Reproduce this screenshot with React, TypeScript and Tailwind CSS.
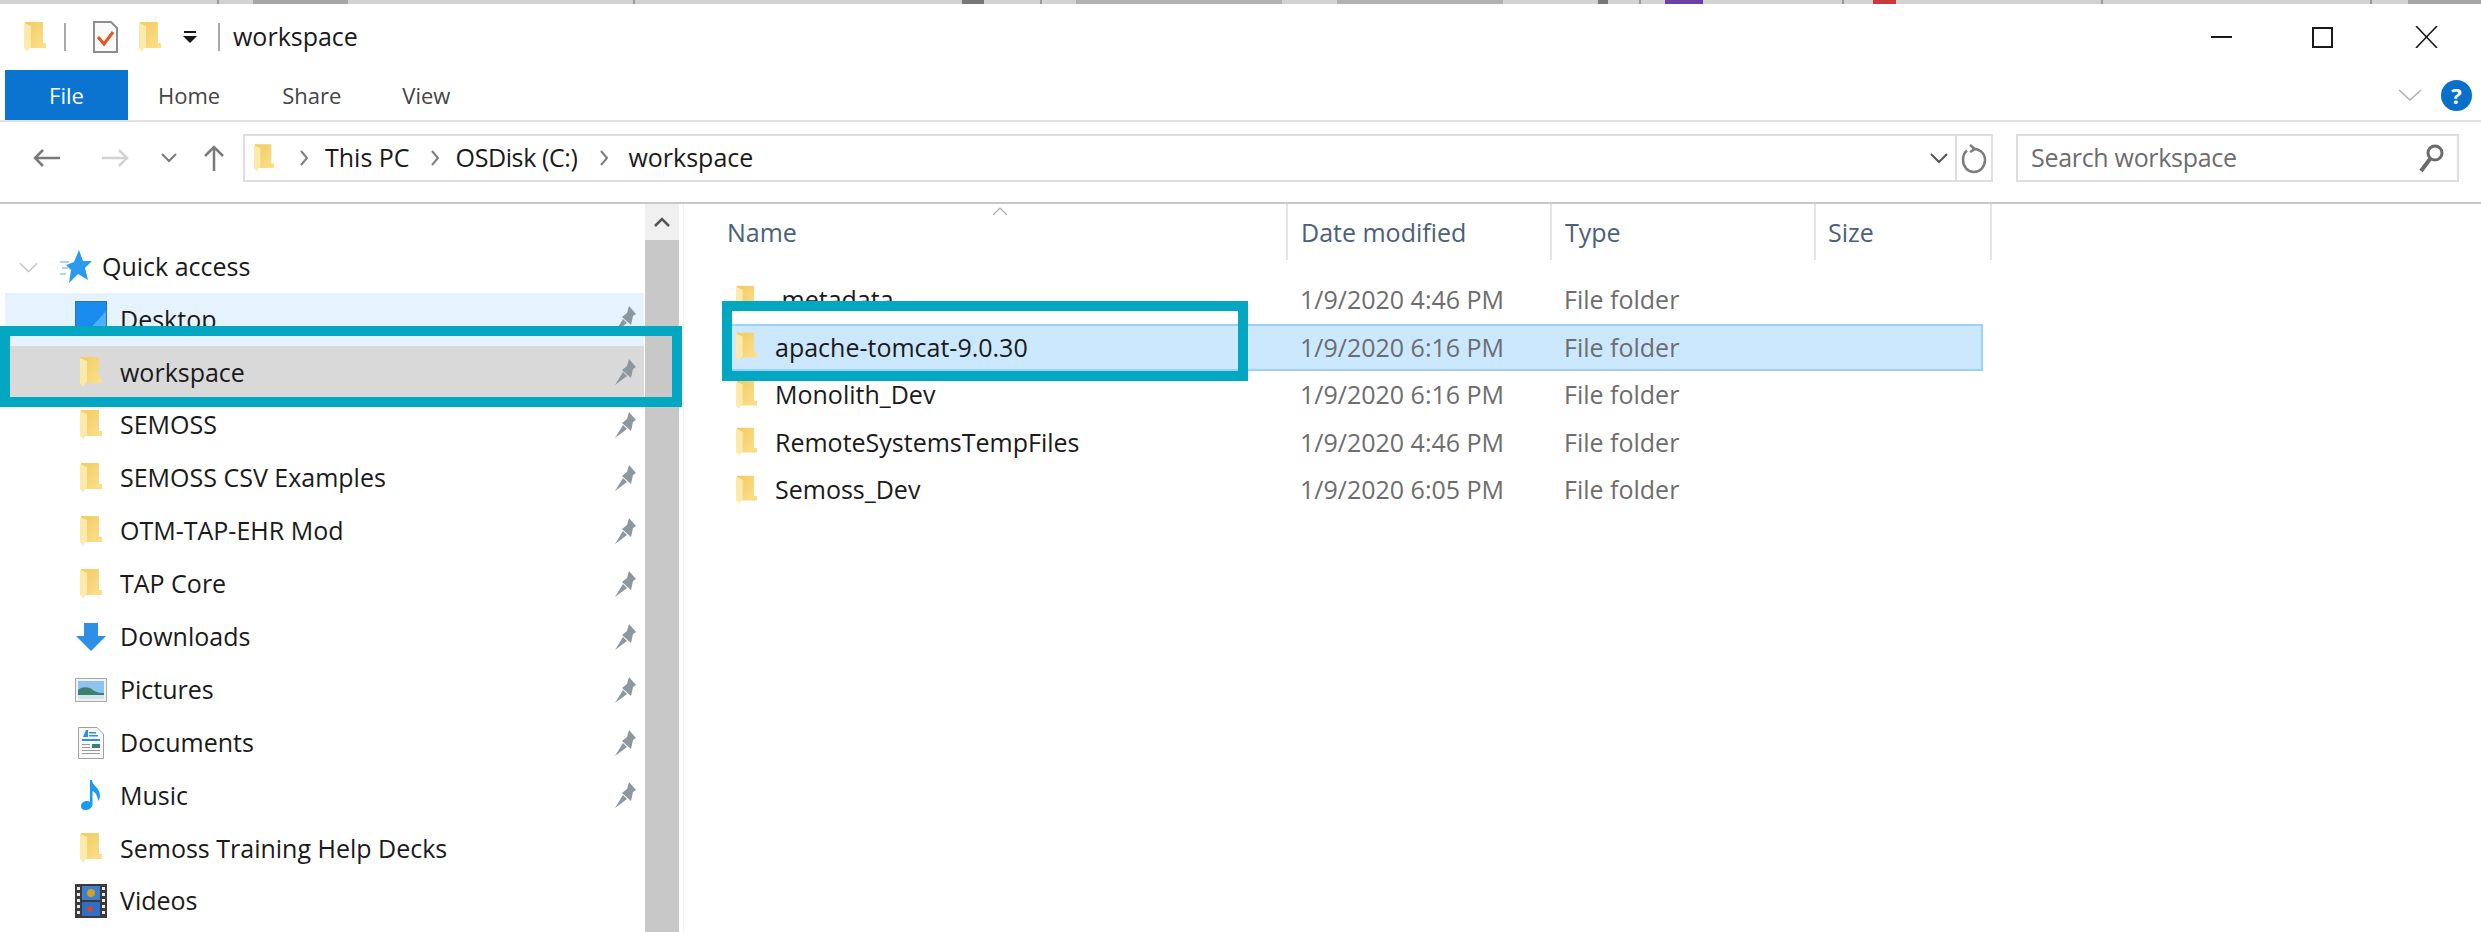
const segments = [
  "w-[217px]", "w-[2px] bg-[#999]", "w-[34px]", "w-[95px] bg-[#a6a6a4]", "w-[285px]", "w-[2px] bg-[#999]", "w-[327px]",
  "w-[22px] bg-[#777]", "w-[56px]", "w-[2px] bg-[#999]", "w-[34px]", "w-[206px] bg-[#b0b0ae]", "w-[55px]", "w-[166px] bg-[#b0b0ae]",
  "w-[95px]", "w-[10px] bg-[#777]", "w-[31px]", "w-[2px] bg-[#999]", "w-[24px]", "w-[38px] bg-[#6b3fa5]", "w-[139px]", "w-[2px] bg-[#999]",
  "w-[29px]", "w-[23px] bg-[#c8383c]", "w-[205px]", "w-[2px] bg-[#999]", "w-[267px]", "w-[2px] bg-[#999]", "w-[36px]", "w-[73px] bg-[#a6a6a4]",
];

const pinned = ["Desktop", "workspace", "SEMOSS", "SEMOSS CSV Examples", "OTM-TAP-EHR Mod", "TAP Core", "Downloads", "Pictures", "Documents", "Music"];

const files = [
  { name: ".metadata", date: "1/9/2020 4:46 PM" },
  { name: "apache-tomcat-9.0.30", date: "1/9/2020 6:16 PM", selected: true },
  { name: "Monolith_Dev", date: "1/9/2020 6:16 PM" },
  { name: "RemoteSystemsTempFiles", date: "1/9/2020 4:46 PM" },
  { name: "Semoss_Dev", date: "1/9/2020 6:05 PM" },
];

function Folder({ className = "w-[22px] h-[30px]" }: { className?: string }) {
  return (
    <svg viewBox="0 0 22 30" className={className}>
      <defs>
        <linearGradient id="folderBody" x1="0" y1="0" x2="1" y2="1">
          <stop offset="0" stopColor="#f2cb62" />
          <stop offset="1" stopColor="#fbe08c" />
        </linearGradient>
      </defs>
      <path d="M1 0H19V21H22V26H4L1 22Z" fill="url(#folderBody)" />
      <path d="M0 1L7 4V25L4 27.500V30L0 26Z" fill="#fce9ac" />
    </svg>
  );
}

function Pin() {
  return (
    <svg viewBox="0 0 22 30" className="w-[22px] h-[30px]">
      <path d="M15 2L22 10L19 12L17 21L8 13L13 9Z" fill="#8c979e" />
      <path d="M9 15L1 28L13 19Z" fill="#8c979e" />
    </svg>
  );
}

function RowIcon({ name }: { name: string }) {
  if (name === "Desktop") {
    return (
      <svg viewBox="0 0 32 32" className="w-[32px] h-[32px] mt-[-4px]">
        <rect x="0.5" y="0.5" width="31" height="31" fill="#1a8cf0" stroke="#3b6ea5" />
        <path d="M12 31L31 10V31Z" fill="#4db1fa" />
      </svg>
    );
  }
  if (name === "Downloads") {
    return (
      <svg viewBox="0 0 30 28" className="w-[30px] h-[28px]">
        <path d="M8 0H22V13H30L15 28L0 13H8Z" fill="#2f8fe6" />
      </svg>
    );
  }
  if (name === "Pictures") {
    return (
      <svg viewBox="0 0 32 24" className="w-[32px] h-[24px]">
        <rect x="0.5" y="0.5" width="31" height="23" fill="#f2f2f2" stroke="#a8a8a8" />
        <rect x="3" y="3" width="26" height="18" fill="#8cc4ee" />
        <path d="M3 12C8 8 14 9 18 12C22 15 26 15 29 15V21H3Z" fill="#3f7f70" />
        <path d="M3 17H29V21H3Z" fill="#cfe6ee" />
      </svg>
    );
  }
  if (name === "Documents") {
    return (
      <svg viewBox="0 0 26 32" className="w-[26px] h-[32px]">
        <path d="M0.5 0.5H19L25.5 7V31.5H0.5Z" fill="#fafafa" stroke="#a0a0a0" />
        <path d="M5 10L8 3H10V10ZM11 5H18V6.500H11ZM11 8H20V9.500H11Z" fill="#2f8fe6" />
        <path d="M4 12H22V14H4Z" fill="#2f8fe6" />
        <path d="M4 17H12V18H4ZM4 20H12V21H4ZM4 23H22V24H4ZM4 26H22V27H4Z" fill="#999" />
        <rect x="14" y="17" width="8" height="4" fill="#3b7f70" />
      </svg>
    );
  }
  if (name === "Music") {
    return (
      <svg viewBox="0 0 20 30" className="w-[20px] h-[30px]">
        <path d="M9 0H11C11 6 19 7 19 16C19 18 18 20 17 21C17 16 14 12 11.500 11V24C11.500 28 8 30 4 30C1 30 0 28 0 26C0 23 3 21 6 21C7.500 21 8.500 21.500 9 22Z" fill="#1a9bf0" />
      </svg>
    );
  }
  return <Folder />;
}

function NavChevron() {
  return (
    <svg viewBox="0 0 10 16" className="w-[10px] h-[16px]">
      <path d="M2 1L8 8L2 15" fill="none" stroke="#7d7d7d" strokeWidth="2" />
    </svg>
  );
}

export default function App() {
  return (
    <div className="relative w-full h-[932px] overflow-hidden bg-white text-[25px] text-[#1a1a1a]" style={{ fontFamily: '"Open Sans", sans-serif' }}>
      {/* sliver of the window behind */}
      <div className="flex h-[4px] bg-[#d3d3d1]">
        {segments.map((s, i) => (
          <div key={i} className={s} />
        ))}
      </div>

      {/* title bar */}
      <div className="flex items-center h-[66px] pl-[24px]">
        <Folder />
        <div className="w-[2px] h-[28px] bg-[#a8a8a8] ml-[18px]" />
        <svg viewBox="0 0 25 32" className="w-[25px] h-[32px] ml-[27px]">
          <path d="M1 1H18L24 7V31H1Z" fill="#fafafa" stroke="#8d8d8d" strokeWidth="2" />
          <path d="M5 16L11 23L20 11" fill="none" stroke="#e8541e" strokeWidth="3" />
        </svg>
        <Folder className="w-[22px] h-[30px] ml-[21px]" />
        <svg viewBox="0 0 14 12" className="w-[14px] h-[12px] ml-[22px]">
          <path d="M1 0H13V2H1ZM0 5H14L7 12Z" fill="#1a1a1a" />
        </svg>
        <div className="w-[2px] h-[28px] bg-[#a8a8a8] ml-[21px]" />
        <span className="ml-[13px]">workspace</span>
        <div className="ml-auto flex items-center">
          <div className="w-[21px] h-[2px] bg-[#1a1a1a]" />
          <div className="w-[21px] h-[21px] border-2 border-[#1a1a1a] ml-[80px]" />
          <svg viewBox="0 0 23 22" className="w-[23px] h-[22px] ml-[82px] mr-[43px]">
            <path d="M1 0L22 22M22 0L1 22" stroke="#1a1a1a" strokeWidth="1.600" />
          </svg>
        </div>
      </div>

      {/* ribbon tabs */}
      <div className="flex items-center h-[52px] pl-[5px] border-b-2 border-[#e1e1e1] text-[22px] text-[#444]">
        <div className="flex items-center justify-center w-[123px] h-[50px] bg-[#0a74d0] text-white">File</div>
        <span className="ml-[30px]">Home</span>
        <span className="ml-[62px]">Share</span>
        <span className="ml-[61px]">View</span>
        <svg viewBox="0 0 24 12" className="w-[24px] h-[12px] ml-auto">
          <path d="M1 1L12 11L23 1" fill="none" stroke="#b0b0b0" strokeWidth="1.500" />
        </svg>
        <div className="flex items-center justify-center w-[31px] h-[31px] rounded-full bg-[#0a6fc8] text-white font-bold ml-[19px] mr-[9px]">?</div>
      </div>

      {/* address row */}
      <div className="flex items-center h-[82px] pl-[33px] pb-[8px] border-b-2 border-[#c8c8c8]">
        <svg viewBox="0 0 28 20" className="w-[28px] h-[20px]">
          <path d="M27 10H2M10 2L2 10L10 18" fill="none" stroke="#7a7a7a" strokeWidth="2.500" />
        </svg>
        <svg viewBox="0 0 28 20" className="w-[28px] h-[20px] ml-[40px]">
          <path d="M1 10H26M18 2L26 10L18 18" fill="none" stroke="#d2d2d2" strokeWidth="2.500" />
        </svg>
        <svg viewBox="0 0 16 10" className="w-[16px] h-[10px] ml-[32px]">
          <path d="M1 1L8 8L15 1" fill="none" stroke="#7a7a7a" strokeWidth="2" />
        </svg>
        <svg viewBox="0 0 20 26" className="w-[20px] h-[26px] ml-[27px]">
          <path d="M10 26V2M1 11L10 2L19 11" fill="none" stroke="#7a7a7a" strokeWidth="2.500" />
        </svg>
        <div className="flex items-center w-[1750px] h-[48px] ml-[19px] border-2 border-[#dedede]">
          <Folder className="w-[20px] h-[30px] ml-[9px]" />
          <div className="ml-[25px]"><NavChevron /></div>
          <span className="ml-[16px]">This PC</span>
          <div className="ml-[20px]"><NavChevron /></div>
          <span className="ml-[16px] tracking-[-0.4px]">OSDisk (C:)</span>
          <div className="ml-[22px]"><NavChevron /></div>
          <span className="ml-[19px]">workspace</span>
          <svg viewBox="0 0 18 11" className="w-[18px] h-[11px] ml-auto mr-[7px]">
            <path d="M1 1L9 9L17 1" fill="none" stroke="#555" strokeWidth="2" />
          </svg>
          <div className="flex items-center justify-center w-[36px] h-full border-l-2 border-[#dedede]">
            <svg viewBox="0 0 26 32" className="w-[26px] h-[32px]">
              <path d="M9 3L14 7L9 10M11 6.500C17 6.500 24 10 24 18C24 25 19 30 13 30C7 30 2 25 2 18C2 14 3 11 6 8.500" fill="none" stroke="#7d7d7d" strokeWidth="2.500" />
            </svg>
          </div>
        </div>
        <div className="flex items-center w-[443px] h-[48px] ml-[23px] pl-[13px] border-2 border-[#dedede] text-[#6d6d6d]">
          <span className="tracking-[-0.3px]">Search workspace</span>
          <svg viewBox="0 0 26 30" className="w-[26px] h-[30px] ml-auto mr-[12px]">
            <circle cx="16" cy="10" r="7" fill="none" stroke="#6a6a6a" strokeWidth="3" />
            <path d="M11 16L2 28" stroke="#6a6a6a" strokeWidth="4" />
          </svg>
        </div>
      </div>

      <div className="flex">
        {/* navigation pane */}
        <div className="flex w-[684px] h-[728px] pl-[5px] border-r border-[#f0f0f0]">
          <div className="w-[639px] pt-[37px]">
            <div className="flex items-center h-[52px]">
              <svg viewBox="0 0 20 11" className="w-[19px] h-[11px] ml-[14px]">
                <path d="M1 1L10 10L19 1" fill="none" stroke="#c4c4c4" strokeWidth="1.500" />
              </svg>
              <svg viewBox="0 0 32 34" className="w-[32px] h-[34px] ml-[22px]">
                <path d="M19 0L23 11L32 11L25 18L28 30L18 24L9 33L11 20L6 15L14 12Z" fill="#2a9bf0" />
                <path d="M0 12H9M2 18H8M0 24H6" stroke="#8cc8f5" strokeWidth="1.500" />
              </svg>
              <span className="ml-[10px]">Quick access</span>
            </div>
            {pinned.map((name) => (
              <div
                key={name}
                className={`flex items-center h-[52.900px] ${name === "Desktop" ? "bg-[#e5f3ff]" : name === "workspace" ? "bg-[#d9d9d9]" : ""}`}
              >
                <div className="flex items-center justify-center w-[40px] ml-[66px]">
                  <RowIcon name={name} />
                </div>
                <span className="ml-[9px]">{name}</span>
                <div className="ml-auto mr-[8px]"><Pin /></div>
              </div>
            ))}
            <div className="flex items-center h-[52.900px]">
              <div className="flex items-center justify-center w-[40px] ml-[66px]"><Folder /></div>
              <span className="ml-[9px]">Semoss Training Help Decks</span>
            </div>
            <div className="flex items-center h-[52.900px]">
              <div className="flex items-center justify-center w-[40px] ml-[66px]">
                <svg viewBox="0 0 32 34" className="w-[32px] h-[34px]">
                  <rect width="32" height="34" fill="#3a3a3a" />
                  <rect x="7" y="2" width="18" height="14" fill="#3f7fd0" />
                  <rect x="7" y="18" width="18" height="14" fill="#2f6fc8" />
                  <circle cx="16" cy="9" r="4" fill="#c9a227" />
                  <circle cx="15" cy="25" r="3" fill="#c84a3a" />
                  <path d="M2 3H5V6H2ZM2 9H5V12H2ZM2 15H5V18H2ZM2 21H5V24H2ZM2 27H5V30H2ZM27 3H30V6H27ZM27 9H30V12H27ZM27 15H30V18H27ZM27 21H30V24H27ZM27 27H30V30H27Z" fill="#e8e8e8" />
                </svg>
              </div>
              <span className="ml-[9px]">Videos</span>
            </div>
          </div>
          <div className="w-[34px] ml-[1px] flex flex-col">
            <div className="flex items-center justify-center h-[36px] bg-[#f0f0f0]">
              <svg viewBox="0 0 16 10" className="w-[16px] h-[10px]">
                <path d="M1 9L8 2L15 9" fill="none" stroke="#555" strokeWidth="2.500" />
              </svg>
            </div>
            <div className="flex-1 bg-[#c8c8c8]" />
          </div>
        </div>

        {/* file list */}
        <div className="flex-1">
          <div className="grid grid-cols-[604px_264px_264px_176px] h-[56px] text-[#4c607a]">
            <div className="relative flex items-center pl-[43px] pt-[2px] border-r-2 border-[#e5e5e5]">
              Name
              <svg viewBox="0 0 16 8" className="absolute left-[308px] top-[3px] w-[16px] h-[8px]">
                <path d="M1 8L8 1L15 8" fill="none" stroke="#a8a8a8" strokeWidth="1.200" />
              </svg>
            </div>
            <div className="flex items-center pl-[13px] pt-[2px] border-r-2 border-[#e5e5e5]">Date modified</div>
            <div className="flex items-center pl-[13px] pt-[2px] border-r-2 border-[#e5e5e5]">Type</div>
            <div className="flex items-center pl-[12px] pt-[2px] border-r-2 border-[#e5e5e5]">Size</div>
          </div>
          <div className="w-[1261px] ml-[38px] mt-[16px]">
            {files.map((f) => (
              <div
                key={f.name}
                className={`grid grid-cols-[576px_264px_1fr] items-center h-[47.500px] border-2 ${f.selected ? "bg-[#cce8ff] border-[#99d1ff]" : "border-transparent"}`}
              >
                <div className="flex items-center pl-[12px]">
                  <Folder className="w-[21px] h-[30px]" />
                  <span className="ml-[18px]">{f.name}</span>
                </div>
                <span className="text-[#6d6d6d]">{f.date}</span>
                <span className="text-[#6d6d6d]">File folder</span>
              </div>
            ))}
          </div>
        </div>
      </div>

      {/* callout boxes drawn over the screenshot */}
      <div className="absolute left-0 top-[326px] w-[682px] h-[81px] border-[10px] border-[#03a7c1]" />
      <div className="absolute left-[722px] top-[301px] w-[526px] h-[80px] border-[10px] border-[#03a7c1]" />
    </div>
  );
}
